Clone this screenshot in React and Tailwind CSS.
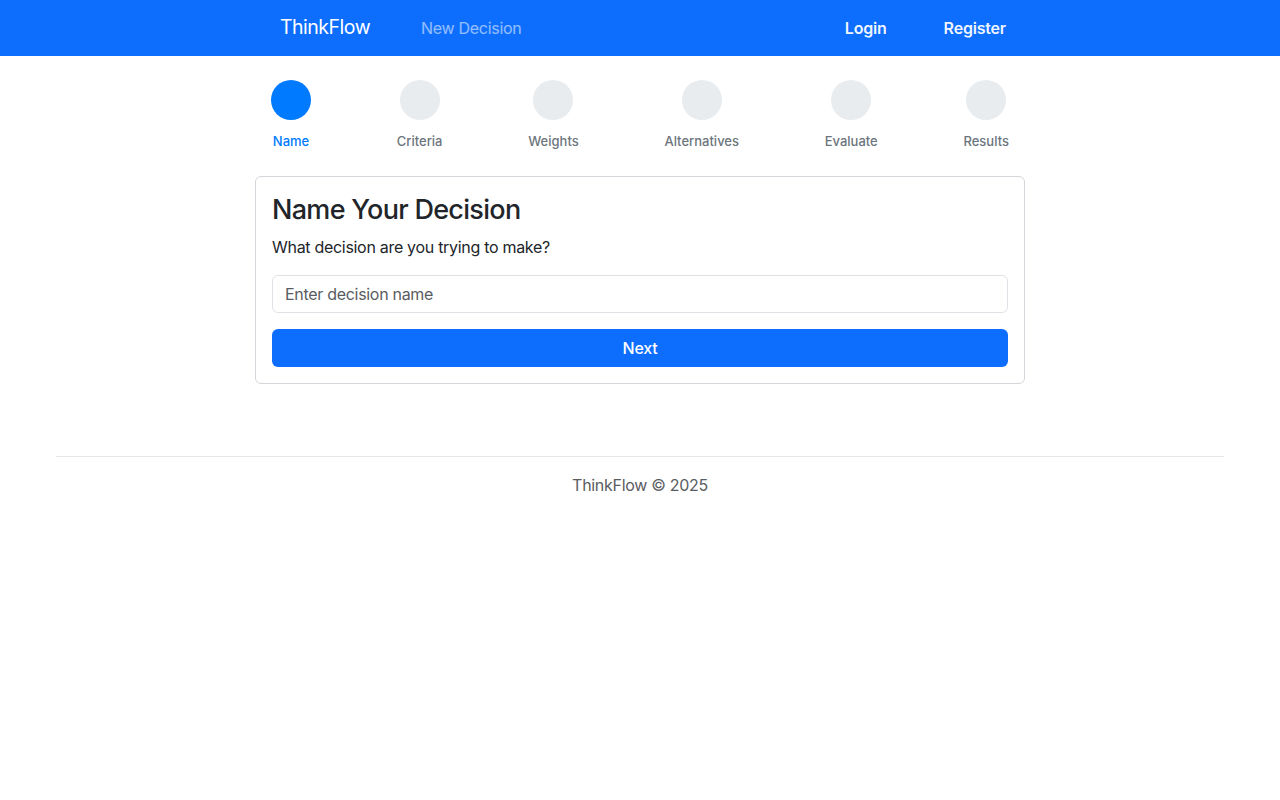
import React from "react";

const steps = ["Name", "Criteria", "Weights", "Alternatives", "Evaluate", "Results"];

export default function App() {
  return (
    <div className="min-h-[800px] bg-white text-[#212529] tracking-[-0.2px]" style={{ fontFamily: "Inter, 'Noto Sans', sans-serif" }}>
      <nav className="h-14 bg-[#0d6efd]">
        <div className="mx-auto flex h-full w-[770px] items-center pl-[25px] pr-[19px]">
          <span className="text-[19.5px] text-white tracking-[-0.5px]">ThinkFlow</span>
          <span className="ml-[51px] text-[16px] text-white/55 tracking-[-0.3px]">New Decision</span>
          <div className="ml-auto flex items-center gap-[57px]">
            <span className="text-[16px] font-semibold text-white/95">Login</span>
            <span className="text-[16px] font-semibold text-white/95">Register</span>
          </div>
        </div>
      </nav>

      <main className="mx-auto w-[770px] pt-6">
        <div className="flex justify-between px-4">
          {steps.map((s, i) => (
            <div key={s} className="flex flex-col items-center">
              <div className={`h-10 w-10 rounded-full ${i === 0 ? "bg-[#007bff]" : "bg-[#e9ecef]"}`} />
              <div className={`mt-[11px] text-[13px] font-medium leading-5 tracking-normal ${i === 0 ? "text-[#007bff]" : "text-[#6c757d]"}`}>{s}</div>
            </div>
          ))}
        </div>

        <div className="mt-[25px] rounded-md border border-[#d3d6da] p-4">
          <h2 className="text-[27px] font-medium leading-[34px] text-[#212529] tracking-[-0.7px]">Name Your Decision</h2>
          <p className="mt-2 text-[16px] leading-6 tracking-[-0.3px]">What decision are you trying to make?</p>
          <input
            className="mt-4 block h-[38px] w-full rounded-md border border-[#dee2e6] px-3 text-[16px] text-[#212529] placeholder:text-[#595c5f] outline-none tracking-[-0.3px]"
            placeholder="Enter decision name"
          />
          <button className="mt-4 flex h-[38px] w-full items-center justify-center rounded-md bg-[#0d6efd] text-[16px] font-medium text-white">
            Next
          </button>
        </div>
      </main>

      <footer className="mx-14 mt-[72px] border-t border-[#e5e7ea] pt-4 text-center text-[16px] leading-6 text-[#595c5f] tracking-[-0.3px]">
        ThinkFlow © 2025
      </footer>
    </div>
  );
}
